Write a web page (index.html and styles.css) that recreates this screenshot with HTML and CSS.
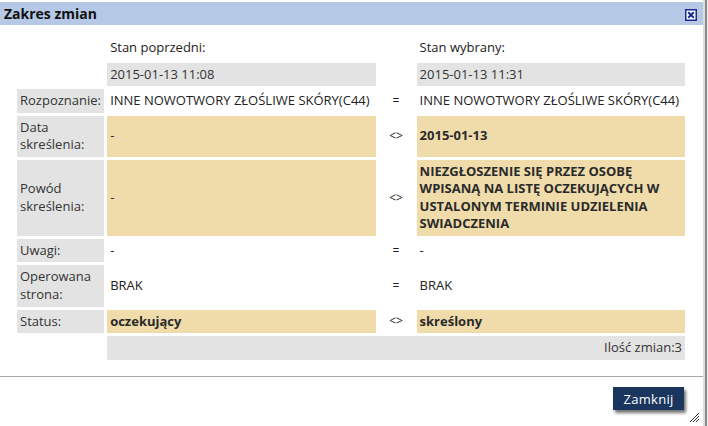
FILE: index.html
```html
<!DOCTYPE html>
<html lang="pl">
<head>
    <meta charset="UTF-8">
    <title>Zakres zmian</title>
    <link rel="stylesheet" href="styles.css">
</head>
<body>
    <div class="dialog">
        <div class="titlebar">
            <span class="title">Zakres zmian</span>
            <span class="close">
                <svg width="12" height="12" viewBox="0 0 12 12">
                    <rect x="0.75" y="0.75" width="10.5" height="10.5" fill="#fff" stroke="#1b2a8f" stroke-width="1.5"/>
                    <path d="M3.2 3.2 L8.8 8.8 M8.8 3.2 L3.2 8.8" stroke="#1b2a8f" stroke-width="2"/>
                </svg>
            </span>
        </div>

        <div class="content">
            <table class="changes">
                <colgroup>
                    <col class="c-label">
                    <col class="c-val">
                    <col class="c-mid">
                    <col class="c-val">
                </colgroup>
                <tr>
                    <td></td>
                    <td>Stan poprzedni:</td>
                    <td></td>
                    <td>Stan wybrany:</td>
                </tr>
                <tr>
                    <td></td>
                    <td class="grey">2015-01-13 11:08</td>
                    <td></td>
                    <td class="grey">2015-01-13 11:31</td>
                </tr>
                <tr>
                    <td class="label">Rozpoznanie:</td>
                    <td>INNE NOWOTWORY ZŁOŚLIWE SKÓRY(C44)</td>
                    <td class="mid">=</td>
                    <td>INNE NOWOTWORY ZŁOŚLIWE SKÓRY(C44)</td>
                </tr>
                <tr>
                    <td class="label">Data skreślenia:</td>
                    <td class="diff empty">-</td>
                    <td class="mid">&lt;&gt;</td>
                    <td class="diff">2015-01-13</td>
                </tr>
                <tr>
                    <td class="label">Powód skreślenia:</td>
                    <td class="diff empty">-</td>
                    <td class="mid">&lt;&gt;</td>
                    <td class="diff">NIEZGŁOSZENIE SIĘ PRZEZ OSOBĘ WPISANĄ NA LISTĘ OCZEKUJĄCYCH W USTALONYM TERMINIE UDZIELENIA SWIADCZENIA</td>
                </tr>
                <tr>
                    <td class="label">Uwagi:</td>
                    <td>-</td>
                    <td class="mid">=</td>
                    <td>-</td>
                </tr>
                <tr>
                    <td class="label">Operowana strona:</td>
                    <td>BRAK</td>
                    <td class="mid">=</td>
                    <td>BRAK</td>
                </tr>
                <tr>
                    <td class="label">Status:</td>
                    <td class="diff">oczekujący</td>
                    <td class="mid">&lt;&gt;</td>
                    <td class="diff">skreślony</td>
                </tr>
                <tr>
                    <td></td>
                    <td class="grey summary" colspan="3">Ilość zmian:3</td>
                </tr>
            </table>
        </div>

        <div class="buttonpane">
            <button class="btn">Zamknij</button>
        </div>

        <svg class="grip" width="11" height="11" viewBox="0 0 11 11">
            <path d="M10 1 L1 10 M10 4 L4 10 M10 7 L7 10" stroke="#333" stroke-width="1"/>
        </svg>
    </div>
</body>
</html>
```

FILE: styles.css
```css
html, body {
    margin: 0;
    height: 100%;
}

body {
    background: linear-gradient(to right, #fff 703px, #dedede 703px 705px, #8a8a8a 705px 707px, #eeeeee 707px);
    font-family: "Open Sans", "DejaVu Sans", sans-serif;
    font-size: 13px;
    color: #222;
}

.dialog {
    position: relative;
    width: 703px;
    height: 426px;
    background: #fff;
    display: flex;
    flex-direction: column;
}

.titlebar {
    margin-top: 2px;
    height: 23px;
    background: #b5c9e7;
    display: flex;
    align-items: center;
    justify-content: space-between;
    padding: 0 6px 0 4px;
}

.title {
    font-weight: bold;
    font-size: 14px;
    color: #111;
}

.close {
    display: flex;
    margin-top: 2px;
}

.content {
    padding: 8px 0 0 14px;
    height: 343px;
}

.changes {
    table-layout: fixed;
    border-spacing: 3px;
    border-collapse: separate;
    width: 674px;
    line-height: 1.35;
}

.c-label { width: 87px; }
.c-val { width: 268px; }
.c-mid { width: 35px; }

.changes td {
    padding: 3px;
    vertical-align: middle;
}

.changes td.label {
    background: #e3e3e3;
    color: #333;
    padding-right: 1px;
}

.changes td.grey {
    background: #e3e3e3;
    color: #333;
}

.changes td.diff {
    background: #f0dcab;
    font-weight: bold;
    color: #2a2a2a;
}

.changes td.diff.empty {
    font-weight: normal;
}

.changes td.mid {
    text-align: center;
    font-size: 12px;
}

.changes td.summary {
    text-align: right;
}

.buttonpane {
    border-top: 1px solid #a9a9a9;
    display: flex;
    justify-content: flex-end;
    padding: 10px 19px 0 0;
}

.btn {
    width: 71px;
    height: 23px;
    border: none;
    background: #1b365e;
    color: #fff;
    font-family: "Open Sans", "DejaVu Sans", sans-serif;
    font-size: 13px;
    letter-spacing: 0.3px;
    padding: 0;
    box-shadow: 2px 3px 3px rgba(0, 0, 0, 0.55);
}

.grip {
    position: absolute;
    right: 3px;
    bottom: 3px;
}
```
